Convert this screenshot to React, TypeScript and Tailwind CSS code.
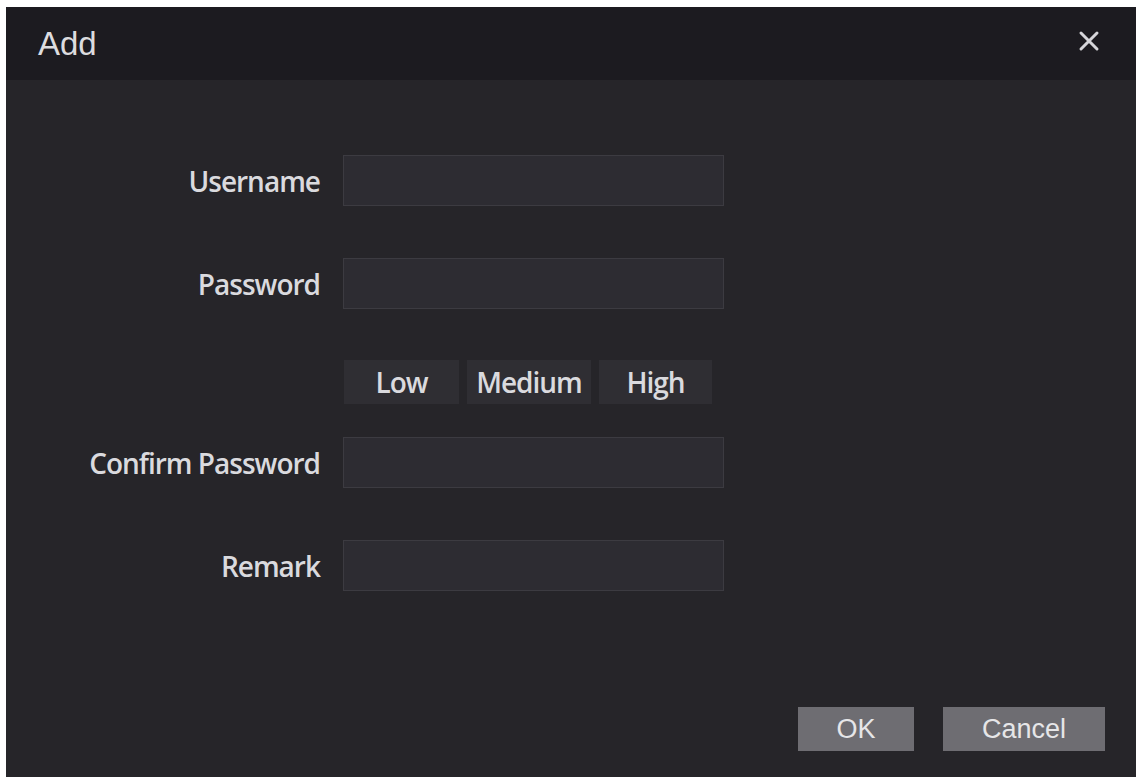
import React from "react";

const labelFont = "font-['Open_Sans',sans-serif] font-semibold text-[28px] tracking-[-1px] text-[#dadade]";

function Row({ label }: { label: string }) {
  return (
    <div className="flex items-center">
      <div className={`w-[314px] text-right leading-none ${labelFont}`}>{label}</div>
      <div className="ml-[23px] h-[51px] w-[381px] border border-[#3c3b41] bg-[#2d2c32]" />
    </div>
  );
}

export default function App() {
  return (
    <div className="h-[781px] w-[1140px] bg-white pl-[6px] pt-[7px]">
      <div className="flex h-[770px] w-[1130px] flex-col bg-[#262529]">
        <div className="flex h-[73px] items-center justify-between bg-[#1c1b20] pl-[32px] pr-[36px]">
          <span className="text-[33px] text-[#dcdcdf] font-['Liberation_Sans',sans-serif]">Add</span>
          <svg width="22" height="22" viewBox="0 0 22 22" className="mt-[-6px]">
            <path d="M3 3 L19 19 M19 3 L3 19" stroke="#d6d6da" strokeWidth="3" strokeLinecap="round" />
          </svg>
        </div>
        <div className="flex flex-col pt-[75px]">
          <Row label="Username" />
          <div className="h-[52px]" />
          <Row label="Password" />
          <div className="ml-[338px] mt-[51px] flex gap-[8px]">
            {["Low", "Medium", "High"].map((t, i) => (
              <div
                key={t}
                className={`flex h-[44px] items-center justify-center bg-[#2f2e33] leading-none ${labelFont} ${
                  i === 0 ? "w-[115px]" : i === 1 ? "w-[124px]" : "w-[113px]"
                }`}
              >
                {t}
              </div>
            ))}
          </div>
          <div className="h-[33px]" />
          <Row label="Confirm Password" />
          <div className="h-[52px]" />
          <Row label="Remark" />
          <div className="mt-[116px] flex justify-end gap-[29px] pr-[31px]">
            <button className="h-[44px] w-[116px] bg-[#6e6d72] text-[27px] text-[#e6e6e8] font-['Liberation_Sans',sans-serif]">
              OK
            </button>
            <button className="h-[44px] w-[162px] bg-[#6e6d72] text-[27px] text-[#e6e6e8] font-['Liberation_Sans',sans-serif]">
              Cancel
            </button>
          </div>
        </div>
      </div>
    </div>
  );
}
